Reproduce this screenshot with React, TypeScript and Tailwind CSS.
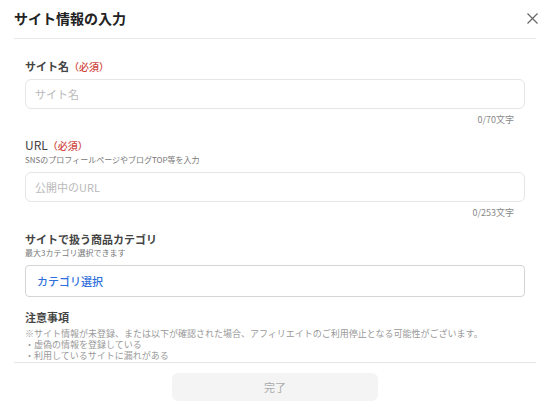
import React from 'react';

const jp = { fontFamily: '"Noto Sans CJK JP", "Noto Sans", sans-serif' };

function Required() {
    return <span className="text-[10px] font-medium text-[#d0473e]">（必須）</span>;
}

function TextField({ placeholder, max }: { placeholder: string; max: number }) {
    return (
        <div>
            <div className="flex h-[30px] items-center rounded-[6px] border border-[#e6e6e6] bg-white px-[9px]">
                <span className="text-[11px] text-[#b9b9b9]">{placeholder}</span>
            </div>
            <div className="mt-[5px] pr-[11px] text-right text-[9px] leading-[12px] text-[#888]">
                0/{max}文字
            </div>
        </div>
    );
}

export default function App() {
    return (
        <div className="flex h-[413px] w-[550px] flex-col overflow-hidden bg-white" style={jp}>
            {/* Header */}
            <div className="px-[14px]">
                <div className="flex h-[39px] items-center justify-between border-b border-[#e9e9e9] pb-[2px]">
                    <h1 className="text-[14px] font-bold text-[#222]">サイト情報の入力</h1>
                    <button className="mr-[-6px] flex h-[20px] w-[20px] items-center justify-center text-[#666]">
                        <svg width="11" height="11" viewBox="0 0 11 11" fill="none" stroke="currentColor" strokeWidth="1.2">
                            <path d="M0.5 0.5 L10.5 10.5 M10.5 0.5 L0.5 10.5" />
                        </svg>
                    </button>
                </div>
            </div>

            {/* Body */}
            <div className="flex-1 overflow-hidden px-[25px] pt-[19px]">
                <div className="text-[11px] font-bold leading-[16px] text-[#444]">
                    サイト名<Required />
                </div>
                <div className="mt-[4px]">
                    <TextField placeholder="サイト名" max={70} />
                </div>

                <div className="mt-[11px] text-[12px] leading-[16px] text-[#444]">
                    URL<Required />
                </div>
                <div className="text-[8px] leading-[11px] text-[#777]">SNSのプロフィールページやブログTOP等を入力</div>
                <div className="mt-[7px]">
                    <TextField placeholder="公開中のURL" max={253} />
                </div>

                <div className="mt-[13px] text-[11px] font-bold leading-[15px] text-[#444]">
                    サイトで扱う商品カテゴリ
                </div>
                <div className="text-[8px] leading-[11px] text-[#777]">最大3カテゴリ選択できます</div>
                <div className="mt-[7px] flex h-[32px] items-center rounded-[4px] border border-[#d4d4d4] px-[11px]">
                    <span className="text-[11px] font-medium text-[#2f6fdc]">カテゴリ選択</span>
                </div>

                <div className="mt-[12px] text-[11px] font-bold leading-[16px] text-[#444]">注意事項</div>
                <div className="mt-[3px] text-[9px] leading-[11px] text-[#999]">
                    <p>※サイト情報が未登録、または以下が確認された場合、アフィリエイトのご利用停止となる可能性がございます。</p>
                    <p>・虚偽の情報を登録している</p>
                    <p>・利用しているサイトに漏れがある</p>
                    <p>・最終ログインから長期間ログインがない等</p>
                </div>
            </div>

            {/* Footer */}
            <div className="px-[14px]">
                <div className="flex h-[51px] justify-center border-t border-[#e6e6e6] pt-[10px]">
                    <button className="h-[28px] w-[206px] rounded-[6px] bg-[#f4f4f4] text-[11px] text-[#aaa]">完了</button>
                </div>
            </div>
        </div>
    );
}
